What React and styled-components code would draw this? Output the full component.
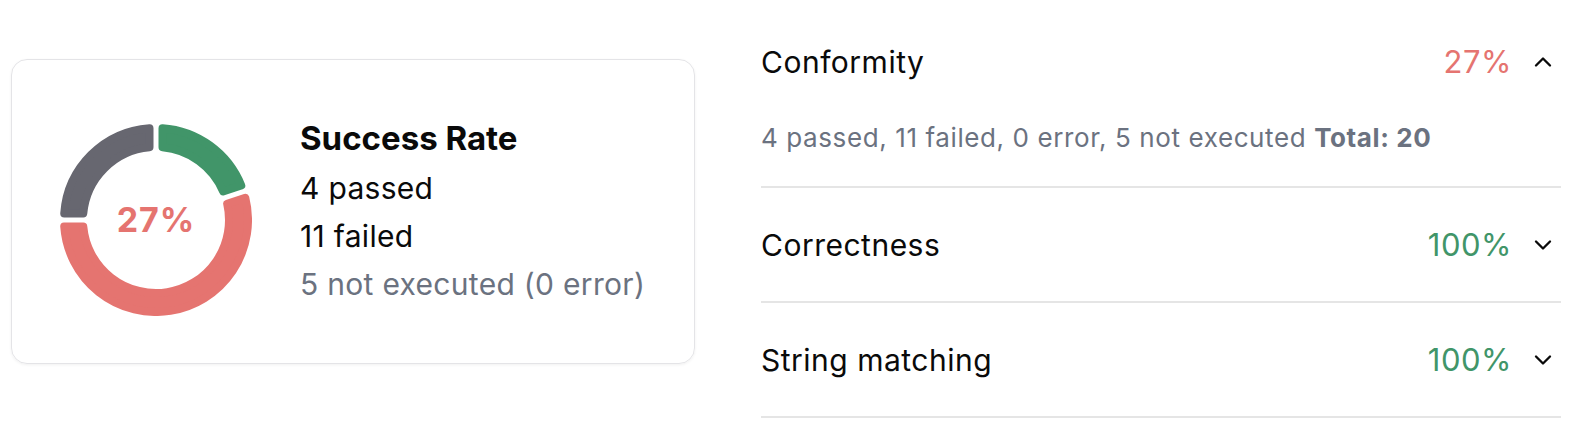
import { useState } from 'react';
import styled, { createGlobalStyle } from 'styled-components';
import { ChevronDown, ChevronUp } from 'lucide-react';

const GlobalStyle = createGlobalStyle`
  html, body {
    margin: 0;
    padding: 0;
    background: #ffffff;
    font-family: 'Inter', 'Liberation Sans', sans-serif;
    color: #0a0a0a;
  }
`;

const COLORS = {
  passed: '#419569',
  failed: '#e57470',
  skipped: '#676770',
  muted: '#6b7280',
};

const Page = styled.div`
  display: flex;
  align-items: center;
  gap: 66px;
  padding: 5px 25px 0 11px;
`;

const Card = styled.section`
  box-sizing: border-box;
  width: 684px;
  height: 305px;
  flex-shrink: 0;
  display: flex;
  align-items: center;
  gap: 48px;
  padding: 0 0 0 48px;
  border: 1.5px solid #e4e4e7;
  border-radius: 16px;
  box-shadow: 0 1px 3px rgba(0, 0, 0, 0.06);
`;

const ChartBox = styled.div`
  position: relative;
  width: 192px;
  height: 192px;
  margin-top: 16px;
  flex-shrink: 0;
`;

const ChartLabel = styled.div`
  position: absolute;
  inset: 0;
  display: flex;
  align-items: center;
  justify-content: center;
  font-size: 34px;
  font-weight: 700;
  letter-spacing: 1px;
  color: ${COLORS.failed};
`;

const Stats = styled.div`
  display: flex;
  flex-direction: column;
`;

const StatsTitle = styled.h2`
  margin: 0 0 4px;
  font-size: 33px;
  line-height: 44px;
  font-weight: 700;
`;

const StatLine = styled.div`
  font-size: 30px;
  line-height: 48px;
  letter-spacing: 0.3px;
  color: ${p => (p.$muted ? COLORS.muted : '#0a0a0a')};
`;

const Accordion = styled.div`
  flex: 1;
  display: flex;
  flex-direction: column;
`;

const Item = styled.div`
  border-bottom: 2px solid #e5e5e5;
`;

const Header = styled.button`
  width: 100%;
  height: 113px;
  display: flex;
  align-items: center;
  gap: 17px;
  padding: 0 4px 0 0;
  border: none;
  background: none;
  cursor: pointer;
  font-family: inherit;
  color: #0a0a0a;
  text-align: left;
`;

const ItemTitle = styled.span`
  flex: 1;
  font-size: 30px;
  letter-spacing: 0.5px;
`;

const Percent = styled.span`
  font-size: 31px;
  letter-spacing: 0.5px;
  color: ${p => p.$color};
`;

const Content = styled.div`
  padding: 2px 0 30px;
  font-size: 26px;
  line-height: 36px;
  letter-spacing: 0.6px;
  color: ${COLORS.muted};

  b {
    font-weight: 700;
  }
`;

const polar = (r, deg) => {
  const a = ((deg - 90) * Math.PI) / 180;
  return [100 + r * Math.cos(a), 100 + r * Math.sin(a)];
};

function sectorPath(r0, r1, a0, a1, inset) {
  const off = r => (Math.asin(inset / r) * 180) / Math.PI;
  const [x1, y1] = polar(r1, a0 + off(r1));
  const [x2, y2] = polar(r1, a1 - off(r1));
  const [x3, y3] = polar(r0, a1 - off(r0));
  const [x4, y4] = polar(r0, a0 + off(r0));
  const large = a1 - a0 > 180 ? 1 : 0;
  return `M${x1} ${y1} A${r1} ${r1} 0 ${large} 1 ${x2} ${y2} L${x3} ${y3} A${r0} ${r0} 0 ${large} 0 ${x4} ${y4} Z`;
}

function Donut({ segments }) {
  const total = segments.reduce((s, x) => s + x.value, 0);
  const corner = 4;
  let start = 0;
  return (
    <svg width="192" height="192" viewBox="4 4 192 192">
      {segments.map(seg => {
        const end = start + (seg.value / total) * 360;
        const d = sectorPath(69 + corner, 96 - corner, start, end, 2.5 + corner);
        start = end;
        return (
          <path
            key={seg.color}
            d={d}
            fill={seg.color}
            stroke={seg.color}
            strokeWidth={corner * 2}
            strokeLinejoin="round"
          />
        );
      })}
    </svg>
  );
}

const checks = [
  { name: 'Conformity', pct: 27, passed: 4, failed: 11, error: 0, skipped: 5 },
  { name: 'Correctness', pct: 100, passed: 20, failed: 0, error: 0, skipped: 0 },
  { name: 'String matching', pct: 100, passed: 20, failed: 0, error: 0, skipped: 0 },
];

export default function App() {
  const [open, setOpen] = useState(0);

  return (
    <>
      <GlobalStyle />
      <Page>
        <Card>
          <ChartBox>
            <Donut
              segments={[
                { value: 4, color: COLORS.passed },
                { value: 11, color: COLORS.failed },
                { value: 5, color: COLORS.skipped },
              ]}
            />
            <ChartLabel>27%</ChartLabel>
          </ChartBox>
          <Stats>
            <StatsTitle>Success Rate</StatsTitle>
            <StatLine>4 passed</StatLine>
            <StatLine>11 failed</StatLine>
            <StatLine $muted>5 not executed (0 error)</StatLine>
          </Stats>
        </Card>

        <Accordion>
          {checks.map((c, i) => {
            const isOpen = open === i;
            const Icon = isOpen ? ChevronUp : ChevronDown;
            return (
              <Item key={c.name}>
                <Header onClick={() => setOpen(isOpen ? -1 : i)}>
                  <ItemTitle>{c.name}</ItemTitle>
                  <Percent $color={c.pct === 100 ? COLORS.passed : COLORS.failed}>{c.pct}%</Percent>
                  <Icon size={28} strokeWidth={2} color="#0a0a0a" />
                </Header>
                {isOpen && (
                  <Content>
                    {c.passed} passed, {c.failed} failed, {c.error} error, {c.skipped} not executed{' '}
                    <b>Total: {c.passed + c.failed + c.skipped}</b>
                  </Content>
                )}
              </Item>
            );
          })}
        </Accordion>
      </Page>
    </>
  );
}
